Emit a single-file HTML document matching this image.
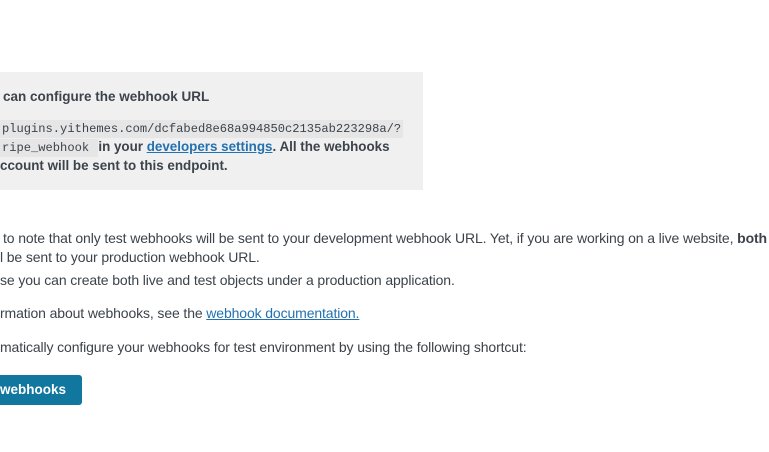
<!DOCTYPE html>
<html><head><meta charset="utf-8"><style>
body{margin:0;width:769px;height:452px;background:#fff;overflow:hidden;position:relative;font-family:"Liberation Sans",sans-serif;color:#3c434a;font-size:13.4px}
.box{position:absolute;left:0;top:72px;width:423px;height:118px;background:#f0f0f1}
.l{position:absolute;white-space:nowrap}
b{font-weight:bold}
code{font-family:"Liberation Mono",monospace;background:#e6e6e6;font-size:12.1px;padding:2px 2px}
a{color:#2271b1;text-decoration:underline}
.btn{position:absolute;left:-10px;top:375px;width:92px;height:30px;background:#11779f;border-radius:3px;color:#fff;font-weight:bold;font-size:13.5px;line-height:30px;text-align:right}
.n{font-size:14px;letter-spacing:-0.12px}
</style></head><body>
<div class="box"></div>
<div class="l" style="left:3px;top:89px;font-weight:bold;font-size:13.5px">can configure the webhook URL</div>
<div class="l" style="left:0;top:120px"><code>plugins.yithemes.com/dcfabed8e68a994850c2135ab223298a/?</code></div>
<div class="l" style="left:0;top:139px"><code>ripe_webhook </code> <b>in your <a href="#"><b>developers settings</b></a>. All the webhooks</b></div>
<div class="l" style="left:0;top:158px"><b>ccount will be sent to this endpoint.</b></div>
<div class="l n" style="left:3px;top:230px">to note that only test webhooks will be sent to your development webhook URL. Yet, if you are working on a live website, <b>both</b></div>
<div class="l n" style="left:0;top:249px">l be sent to your production webhook URL.</div>
<div class="l n" style="left:0;top:272px">se you can create both live and test objects under a production application.</div>
<div class="l n" style="left:0;top:305px">rmation about webhooks, see the <a href="#">webhook documentation.</a></div>
<div class="l n" style="left:0;top:339px">matically configure your webhooks for test environment by using the following shortcut:</div>
<div class="btn"><span style="padding-right:16px">webhooks</span></div>
</body></html>
